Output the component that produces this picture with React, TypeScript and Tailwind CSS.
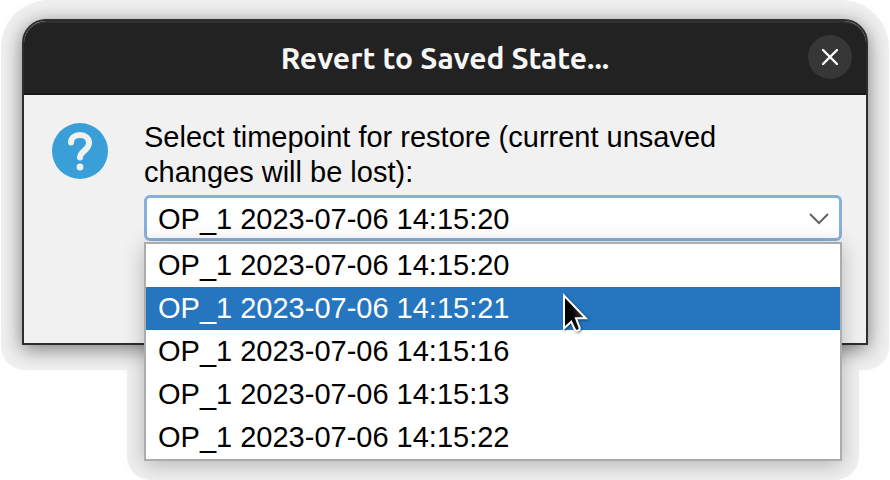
import { useState } from "react";

const timepoints = [
  "OP_1 2023-07-06 14:15:20",
  "OP_1 2023-07-06 14:15:21",
  "OP_1 2023-07-06 14:15:16",
  "OP_1 2023-07-06 14:15:13",
  "OP_1 2023-07-06 14:15:22",
];

function QuestionIcon() {
  return (
    <svg viewBox="0 0 56 56" className="mt-[3px] size-14 shrink-0" aria-hidden="true">
      <circle cx="28" cy="28" r="28" fill="#3a9fd8" />
      <path
        d="M19 19.600C19 14.900 22.800 12 28 12s9 3.200 9 7.800c0 4.200-2.600 6.200-5.200 8.400-2.500 2.100-3.800 3.700-3.800 6.300"
        fill="none"
        stroke="#f1f1f1"
        strokeWidth="6"
        strokeLinecap="round"
      />
      <circle cx="28" cy="44" r="3.4" fill="#f1f1f1" />
    </svg>
  );
}

function Cursor() {
  return (
    <svg
      viewBox="0 0 30 42"
      className="pointer-events-none absolute top-[50px] left-[416px] h-[42px] w-[30px] drop-shadow-[1px_1px_1px_rgba(0,0,0,0.5)]"
      aria-hidden="true"
    >
      <defs>
        <linearGradient id="pointer" x1="0" y1="0.5" x2="1" y2="0.2">
          <stop offset="0.3" stopColor="#000" />
          <stop offset="1" stopColor="#555" />
        </linearGradient>
      </defs>
      <path
        d="M4 3.500V36.500l7.200-6.800 3.400 7.300c.7 1.600 2.200 2.200 3.500 1.600 1.500-.7 2-2.100 1.300-3.600L16 26.300h9.800z"
        fill="url(#pointer)"
        stroke="#fff"
        strokeWidth="2"
      />
    </svg>
  );
}

export default function App() {
  const [selected, setSelected] = useState(timepoints[0]);
  const [active, setActive] = useState(1);

  return (
    <main className="isolate min-h-screen bg-white font-['Liberation_Sans',Arial,sans-serif] text-[29px] text-black">
      <div className="mx-px rounded-t-[48px] rounded-b-3xl bg-[#f0f0f0] px-[21px] pt-[19px] pb-[25px]">
        <section
          role="dialog"
          aria-labelledby="dialog-title"
          className="rounded-t-3xl border-2 border-[#2d2d2d] bg-[#f1f1f1] shadow-[0_4px_20px_rgba(0,0,0,0.5)]"
        >
          <header className="grid h-[74px] grid-cols-[1fr_auto_1fr] items-center rounded-t-[22px] border-t-2 border-b-2 border-t-[#303030] border-b-[#1a181a] bg-[#222222] px-3.5">
            <h1
              id="dialog-title"
              className="col-start-2 font-['Ubuntu','Noto_Sans',sans-serif] text-[30px] leading-9 font-bold text-[#f7f7f7]"
            >
              Revert to Saved State...
            </h1>
            <button
              type="button"
              aria-label="Close"
              className="mb-0.5 flex size-11 items-center justify-center justify-self-end rounded-full bg-[#373737]"
            >
              <svg viewBox="0 0 16 16" className="size-4" aria-hidden="true">
                <path d="M1 1l14 14M15 1L1 15" stroke="#fff" strokeWidth="2.4" strokeLinecap="round" />
              </svg>
            </button>
          </header>

          <div className="flex gap-9 pt-[25px] pr-6 pb-[102px] pl-7">
            <QuestionIcon />
            <div className="flex min-w-0 grow flex-col gap-[5px]">
              <label htmlFor="timepoint" className="leading-[35px]">
                Select timepoint for restore (current unsaved
                <br />
                changes will be lost):
              </label>
              <div className="relative">
                <div className="grid items-center">
                  <select
                    id="timepoint"
                    value={selected}
                    onChange={(e) => setSelected(e.target.value)}
                    className="col-start-1 row-start-1 h-[46px] w-full appearance-none rounded-md border-3 border-[#86b0dc] bg-white pb-0.5 pl-[11px] outline-none"
                  >
                    {timepoints.map((t) => (
                      <option key={t}>{t}</option>
                    ))}
                  </select>
                  <svg
                    viewBox="0 0 20 12"
                    className="pointer-events-none col-start-1 row-start-1 mt-0.5 mr-[13px] h-3 w-5 justify-self-end"
                    aria-hidden="true"
                  >
                    <path d="M1 1l9 9 9-9" fill="none" stroke="#646464" strokeWidth="2" />
                  </svg>
                </div>

                <div className="absolute inset-x-0 top-full mt-px">
                  <div className="absolute -inset-x-[17px] top-0 -bottom-[19px] -z-10 rounded-b-3xl bg-[#f0f0f0]" />
                  <ul
                    role="listbox"
                    aria-label="Timepoints"
                    className="border-2 border-[#acacac] bg-white shadow-[0_4px_20px_rgba(0,0,0,0.25)]"
                  >
                    {timepoints.map((t, i) => (
                      <li
                        key={t}
                        role="option"
                        aria-selected={i === active}
                        onMouseEnter={() => setActive(i)}
                        onClick={() => setSelected(t)}
                        className={
                          i === active
                            ? "h-[43px] bg-[#2675bf] px-3 leading-[43px] text-white"
                            : "h-[43px] px-3 leading-[43px]"
                        }
                      >
                        {t}
                      </li>
                    ))}
                  </ul>
                  <Cursor />
                </div>
              </div>
            </div>
          </div>
        </section>
      </div>
    </main>
  );
}
